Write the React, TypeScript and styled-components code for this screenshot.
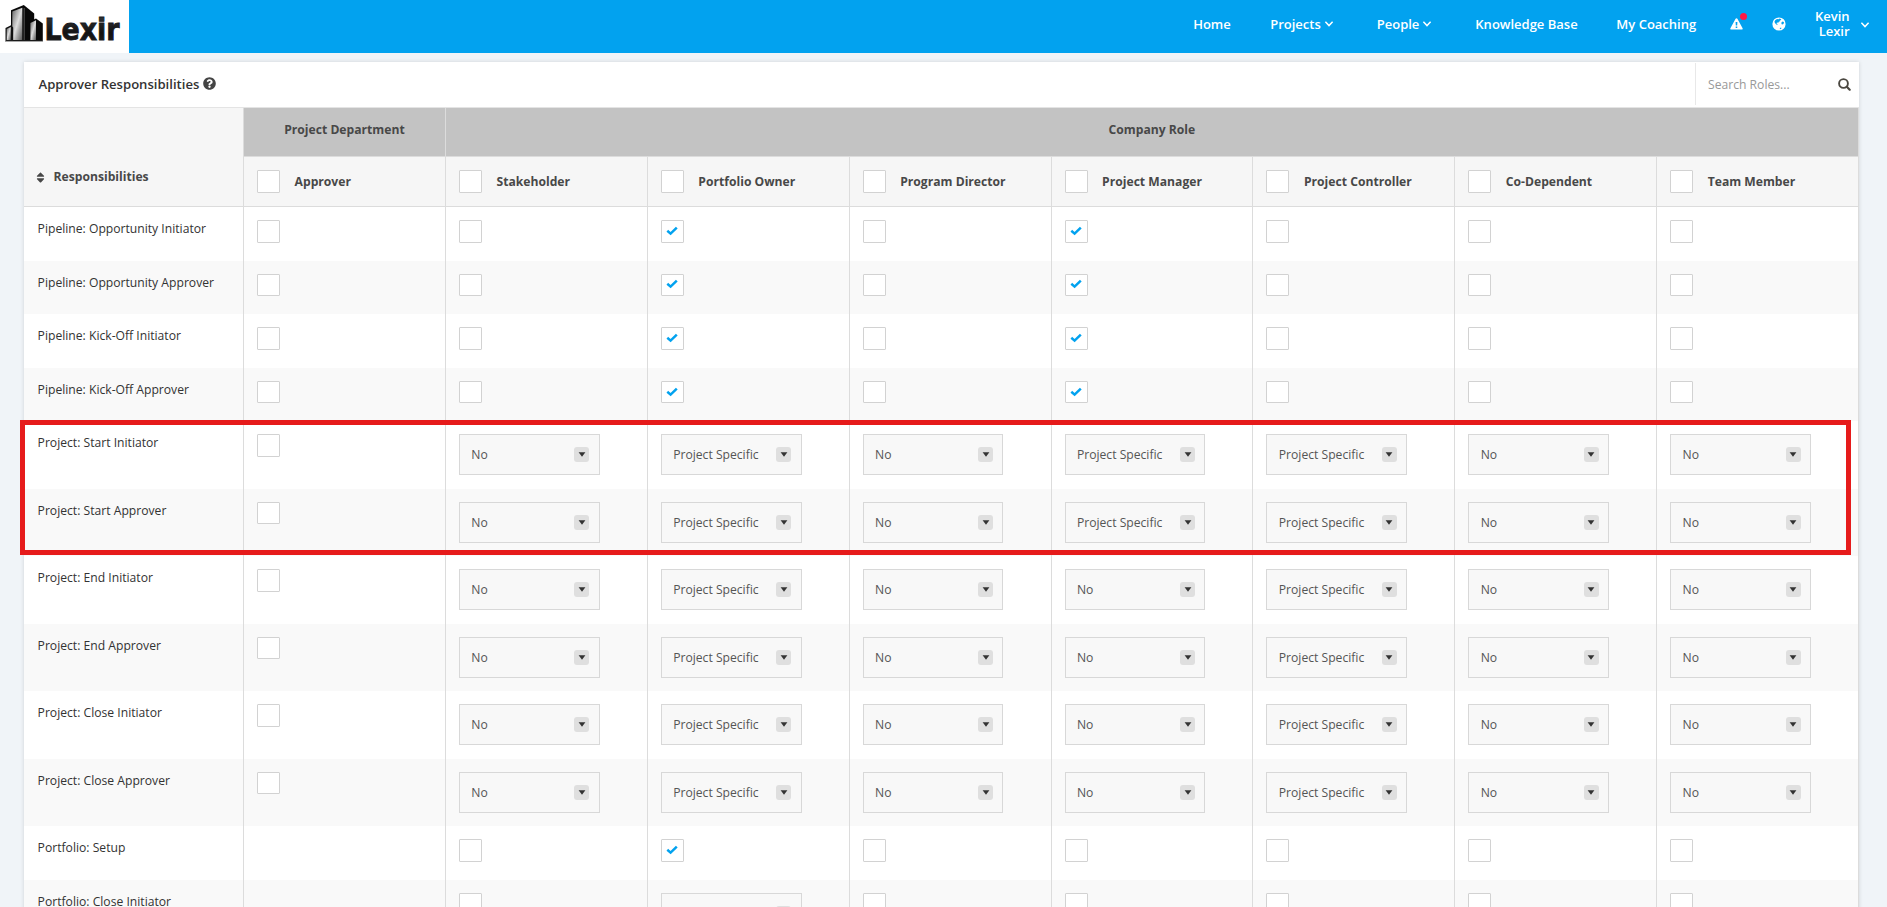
import React from "react";
import styled, { createGlobalStyle, css } from "styled-components";
import { FaQuestionCircle, FaSort } from "react-icons/fa";

const GlobalStyle = createGlobalStyle`
  * { box-sizing: border-box; }
  body {
    margin: 0;
    background: #f0f4f8;
    color: #333;
    font-family: "Open Sans", "Noto Sans", sans-serif;
    font-size: 12.15px;
  }
`;

const Page = styled.div`
  height: 907px;
  overflow: hidden;
  position: relative;
`;

const TopBar = styled.header`
  height: 53px;
  display: flex;
  justify-content: space-between;
  background: #02a2ef;
  color: #fff;
`;

const LogoPanel = styled.a`
  width: 129px;
  height: 53px;
  background: #fff;
  svg { display: block; }
`;

const Nav = styled.nav`
  display: grid;
  grid-template-columns: 77px 106.6px 98.6px 141px 113.5px 42.4px 37.4px 42px 35.4px;
  font-size: 13px;
  font-weight: 600;
  line-height: 15px;
  padding-top: 17px;
  white-space: nowrap;
`;

const NavItem = styled.a`
  display: flex;
  align-items: flex-start;
  gap: 3px;
  height: 20px;
`;

const CaretSvg = styled.svg`
  width: 10px;
  height: 8px;
  margin-top: 3px;
`;

const IconLink = styled.a`
  position: relative;
  height: 20px;
  svg { display: block; }
`;

const AlertDot = styled.span`
  position: absolute;
  left: 10px;
  top: -4px;
  width: 7px;
  height: 7px;
  border-radius: 50%;
  background: #ff1744;
`;

const UserName = styled.span`
  text-align: right;
  white-space: normal;
  margin-top: -8px;
  padding-right: 2px;
`;

const UserCaret = styled.span`
  padding: 0 0 0 8px;
`;

const Card = styled.main`
  width: 1835px;
  margin: 9px 0 0 24px;
  background: #fff;
  box-shadow: 0 0 4px rgba(0, 0, 0, 0.14);
`;

const CardHeader = styled.div`
  height: 46px;
  display: flex;
  justify-content: space-between;
  border-bottom: 1px solid #e4e4e4;
`;

const Title = styled.h1`
  margin: 0;
  padding-left: 14.5px;
  display: flex;
  align-items: center;
  gap: 4px;
  font-size: 13.1px;
  font-weight: 600;
  line-height: 44px;
  height: 44px;
  svg { width: 13px; height: 13px; color: #444; margin-top: -1px; }
`;

const SearchBox = styled.label`
  width: 164px;
  height: 42px;
  margin-top: 1px;
  border-left: 1px solid #e8e8e8;
  display: flex;
  align-items: center;
  padding: 0 8px 0 12px;
`;

const SearchInput = styled.input`
  flex: 1;
  min-width: 0;
  border: 0;
  padding: 0;
  outline: 0;
  font: inherit;
  background: none;
  &::placeholder { color: #999; opacity: 1; }
`;

const Table = styled.div`
  display: grid;
  grid-template-columns: 220px repeat(8, 201.875px);
  grid-template-rows: 49px 50px;
`;

const headText = css`
  font-weight: 700;
  color: #484848;
  font-size: 12.15px;
`;

const CornerHead = styled.div`
  ${headText}
  grid-row: 1 / 3;
  display: flex;
  align-items: flex-end;
  gap: 7.5px;
  padding: 0 0 21px 11px;
  background: #f6f6f6;
  border-right: 1px solid #dcdcdc;
  border-bottom: 1px solid #dcdcdc;
  line-height: 17px;
  svg { width: 11px; height: 13px; margin-bottom: 1px; }
`;

const GroupHead = styled.div<{ $span: number }>`
  ${headText}
  grid-column: span ${(p) => p.$span};
  background: #c3c3c3;
  border-right: 1px solid #dcdcdc;
  border-bottom: 1px solid #dcdcdc;
  text-align: center;
  line-height: 17px;
  padding-top: 13px;
`;

const ColumnHead = styled.div`
  ${headText}
  background: #f6f6f6;
  border-right: 1px solid #dcdcdc;
  border-bottom: 1px solid #dcdcdc;
  display: flex;
  align-items: center;
  gap: 14.6px;
  padding: 0 0 0 13px;
`;

const Row = styled.div<{ $tall: boolean; $striped: boolean }>`
  grid-column: 1 / -1;
  display: grid;
  grid-template-columns: subgrid;
  height: ${(p) => (p.$tall ? 67.45 : 53.6)}px;
  background: ${(p) => (p.$striped ? "#f9f9f9" : "#fff")};
`;

const Cell = styled.div`
  border-right: 1px solid #dcdcdc;
  padding: 13px 0 0 13px;
`;

const LabelCell = styled(Cell)`
  padding-left: 13.6px;
  line-height: 17px;
  white-space: nowrap;
`;

const Box = styled.span`
  width: 23px;
  height: 22.6px;
  flex: none;
  display: flex;
  align-items: center;
  justify-content: center;
  background: #fff;
  border: 1px solid #d2d2d2;
  border-radius: 1px;
  svg { margin: -1px 0 0 0; }
`;

const Select = styled.div`
  width: 140.8px;
  height: 41px;
  display: flex;
  align-items: center;
  justify-content: space-between;
  padding: 0 9.3px 0 11.4px;
  background: #f8f8f8;
  border: 1px solid #d8d8d8;
  color: #555;
`;

const SelectArrow = styled.span`
  width: 15px;
  height: 15px;
  border-radius: 3px;
  background: #dfdfdf;
  display: flex;
  align-items: center;
  justify-content: center;
`;

const Highlight = styled.div`
  position: absolute;
  left: 20px;
  top: 420px;
  width: 1831px;
  height: 134.6px;
  border: 5px solid #e61b1b;
`;

const Logo = () => (
  <svg width="129" height="53" viewBox="0 0 129 53">
    <defs>
      <linearGradient id="face" x1="0" y1="0" x2="1" y2="1">
        <stop offset="0" stopColor="#666" />
        <stop offset="0.5" stopColor="#ddd" />
        <stop offset="1" stopColor="#555" />
      </linearGradient>
      <linearGradient id="ink" x1="0" y1="0" x2="0" y2="1">
        <stop offset="0" stopColor="#3a3d42" />
        <stop offset="0.6" stopColor="#111" />
        <stop offset="1" stopColor="#222" />
      </linearGradient>
    </defs>
    <path d="M11 10.3 23.8 5 34.2 13.5V41H11Z" fill="#080808" />
    <path d="M12.3 11.6 22.3 7.8V40H12.3Z" fill="url(#face)" />
    <path d="M24.2 8V40" stroke="#888" strokeWidth="0.6" />
    <path d="M5.5 28 11 25.3 13.2 27.5V41H5.5Z" fill="#111" />
    <path d="M6.7 29 10.8 27V40H6.7Z" fill="url(#face)" />
    <path d="M29.2 21.8 36 18.5 42.8 23.5V41H29.2Z" fill="#080808" />
    <path d="M30.4 23 36 20.3V40H30.4Z" fill="url(#face)" />
    <path d="M5 41.3H43" stroke="#777" strokeWidth="0.8" />
    <text
      x="44.5"
      y="40.4"
      fontFamily="DejaVu Sans"
      fontWeight="700"
      fontSize="31"
      fill="url(#ink)"
      stroke="#191b1e"
      strokeWidth="0.9"
      textLength="75"
      lengthAdjust="spacingAndGlyphs"
    >
      Lexir
    </text>
  </svg>
);

const Caret = () => (
  <CaretSvg viewBox="0 0 10 8">
    <path d="M1.4 1.8 5 5.6 8.6 1.8" fill="none" stroke="#fff" strokeWidth="1.5" />
  </CaretSvg>
);

const WarningIcon = () => (
  <svg width="13" height="13" viewBox="0 0 13 13">
    <path
      fill="#fff"
      fillRule="evenodd"
      d="M6.5 1.2c.4 0 .7.2.9.5l5.2 9.6c.3.6-.1 1.3-.8 1.3H1.2c-.7 0-1.1-.7-.8-1.3l5.2-9.6c.2-.3.5-.5.9-.5ZM5.6 4.9l.2 3.7h1.4l.2-3.7Zm.1 4.6v1.6h1.6V9.5Z"
    />
  </svg>
);

const GlobeIcon = () => (
  <svg width="14" height="14" viewBox="0 0 14 14">
    <circle cx="7" cy="7" r="6.6" fill="#fff" />
    <path
      fill="#02a2ef"
      d="M3.2 3.2 5 2l1.6.3.9-.7 1.8.6-.5 1-1.1.2.3.8-1.2.5-.5 1.1-1.3-.2-.5.8 1 .5.1.8-1.4-.3-1.4-1.6-.3-1.2ZM9.4 5.4l1.2-.8 1.2.5.2 1-.9 1.2-1.2.1-.5-.8ZM7.6 11.2l1.4-.8.5.8-1 1Z"
    />
  </svg>
);

const SearchIcon = () => (
  <svg width="13" height="13" viewBox="0 0 13 13" fill="none" stroke="#4a4740">
    <circle cx="5.5" cy="5.5" r="4.4" strokeWidth="1.9" />
    <path d="m8.8 8.8 2.9 2.9" strokeWidth="2.2" strokeLinecap="round" />
  </svg>
);

const CheckIcon = () => (
  <svg width="12" height="10" viewBox="0 0 12 10">
    <path d="M1.3 4.7 4.6 7.6 10.8 1.6" fill="none" stroke="#02a2ef" strokeWidth="2.5" />
  </svg>
);

const Checkbox = ({ checked = false }: { checked?: boolean }) => (
  <Box role="checkbox" aria-checked={checked}>{checked && <CheckIcon />}</Box>
);

const Dropdown = ({ value }: { value: string }) => (
  <Select>
    {value}
    <SelectArrow>
      <svg width="8" height="5" viewBox="0 0 8 5">
        <path d="M0.6 0.3h6.8L4 4.8Z" fill="#333" />
      </svg>
    </SelectArrow>
  </Select>
);

const columns = [
  "Approver",
  "Stakeholder",
  "Portfolio Owner",
  "Program Director",
  "Project Manager",
  "Project Controller",
  "Co-Dependent",
  "Team Member",
];

// One letter per column: "." unchecked, "x" checked, "N" No, "P" Project Specific, "_" blank
const rows: [string, string][] = [
  ["Pipeline: Opportunity Initiator", "..x.x..."],
  ["Pipeline: Opportunity Approver", "..x.x..."],
  ["Pipeline: Kick-Off Initiator", "..x.x..."],
  ["Pipeline: Kick-Off Approver", "..x.x..."],
  ["Project: Start Initiator", ".NPNPPNN"],
  ["Project: Start Approver", ".NPNPPNN"],
  ["Project: End Initiator", ".NPNNPNN"],
  ["Project: End Approver", ".NPNNPNN"],
  ["Project: Close Initiator", ".NPNNPNN"],
  ["Project: Close Approver", ".NPNNPNN"],
  ["Portfolio: Setup", "_.x....."],
  ["Portfolio: Close Initiator", "_.N....."],
];

const renderControl = (code: string) => {
  if (code === "_") return null;
  if (code === "N") return <Dropdown value="No" />;
  if (code === "P") return <Dropdown value="Project Specific" />;
  return <Checkbox checked={code === "x"} />;
};

export default function App() {
  return (
    <Page>
      <GlobalStyle />
      <TopBar>
        <LogoPanel><Logo /></LogoPanel>
        <Nav>
          <NavItem>Home</NavItem>
          <NavItem>Projects <Caret /></NavItem>
          <NavItem>People <Caret /></NavItem>
          <NavItem>Knowledge Base</NavItem>
          <NavItem>My Coaching</NavItem>
          <IconLink><WarningIcon /><AlertDot /></IconLink>
          <IconLink><GlobeIcon /></IconLink>
          <UserName>Kevin Lexir</UserName>
          <UserCaret><Caret /></UserCaret>
        </Nav>
      </TopBar>
      <Card>
        <CardHeader>
          <Title>Approver Responsibilities <FaQuestionCircle /></Title>
          <SearchBox>
            <SearchInput placeholder="Search Roles..." />
            <SearchIcon />
          </SearchBox>
        </CardHeader>
        <Table>
          <CornerHead><FaSort />Responsibilities</CornerHead>
          <GroupHead $span={1}>Project Department</GroupHead>
          <GroupHead $span={7}>Company Role</GroupHead>
          {columns.map((name) => (
            <ColumnHead key={name}><Checkbox />{name}</ColumnHead>
          ))}
          {rows.map(([label, codes], i) => (
            <Row key={label} $tall={/[NP]/.test(codes)} $striped={i % 2 === 1}>
              <LabelCell>{label}</LabelCell>
              {codes.split("").map((code, c) => (
                <Cell key={columns[c]}>{renderControl(code)}</Cell>
              ))}
            </Row>
          ))}
        </Table>
      </Card>
      <Highlight />
    </Page>
  );
}
